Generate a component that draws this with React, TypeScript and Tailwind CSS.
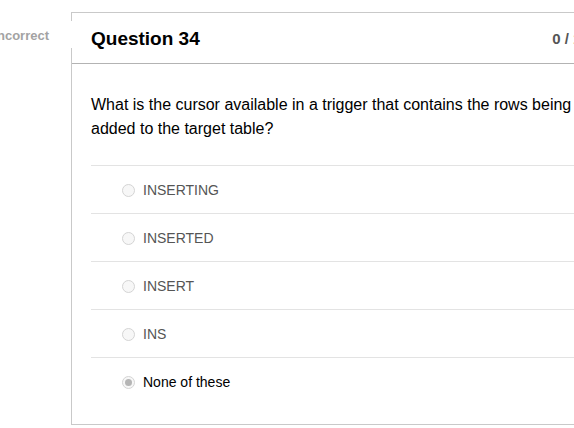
import React from 'react';

const answers = [
  { text: 'INSERTING', selected: false },
  { text: 'INSERTED', selected: false },
  { text: 'INSERT', selected: false },
  { text: 'INS', selected: false },
  { text: 'None of these', selected: true },
];

function Radio({ checked }: { checked: boolean }) {
  return (
    <span className="flex h-[13px] w-[13px] shrink-0 items-center justify-center rounded-full border border-[#d4d4d4] bg-[#f7f7f7]">
      {checked && <span className="h-[7px] w-[7px] rounded-full bg-[#b5b5b5]" />}
    </span>
  );
}

export default function App() {
  return (
    <div
      className="relative h-[428px] w-[574px] overflow-hidden bg-white"
      style={{ fontFamily: '"Liberation Sans", Arial, sans-serif' }}
    >
      {/* Incorrect flag */}
      <div className="absolute left-[-60px] top-[21px] z-10 flex h-[27px] w-[132px] items-center justify-end bg-white pr-[23px] pt-[2px]">
        <span className="text-[13px] font-bold text-[#a3a3a3]">Incorrect</span>
      </div>

      <div className="ml-[71px] mt-[12px] w-[557px] border border-[#c9c9c9] bg-white">
        <div className="flex h-[51px] items-center justify-between border-b border-[#b3b3b3] px-[19px] pt-[3px]">
          <h2 className="text-[19px] font-bold text-black">Question 34</h2>
          <span className="text-[15px] font-bold text-[#555]">0 / 1 pts</span>
        </div>

        <div className="px-[19px] pb-[19px] pt-[29px]">
          <p className="text-[16px] leading-[24px] text-black">
            What is the cursor available in a trigger that contains the rows being added to the target table?
          </p>

          <div className="mt-[24px]">
            {answers.map((a) => (
              <div
                key={a.text}
                className="flex h-[48px] items-center gap-[8px] border-t border-[#e3e3e3] pl-[31px] pt-[1px]"
              >
                <Radio checked={a.selected} />
                <span className={`text-[14px] ${a.selected ? 'text-black' : 'text-[#555]'}`}>{a.text}</span>
              </div>
            ))}
          </div>
        </div>
      </div>
    </div>
  );
}
